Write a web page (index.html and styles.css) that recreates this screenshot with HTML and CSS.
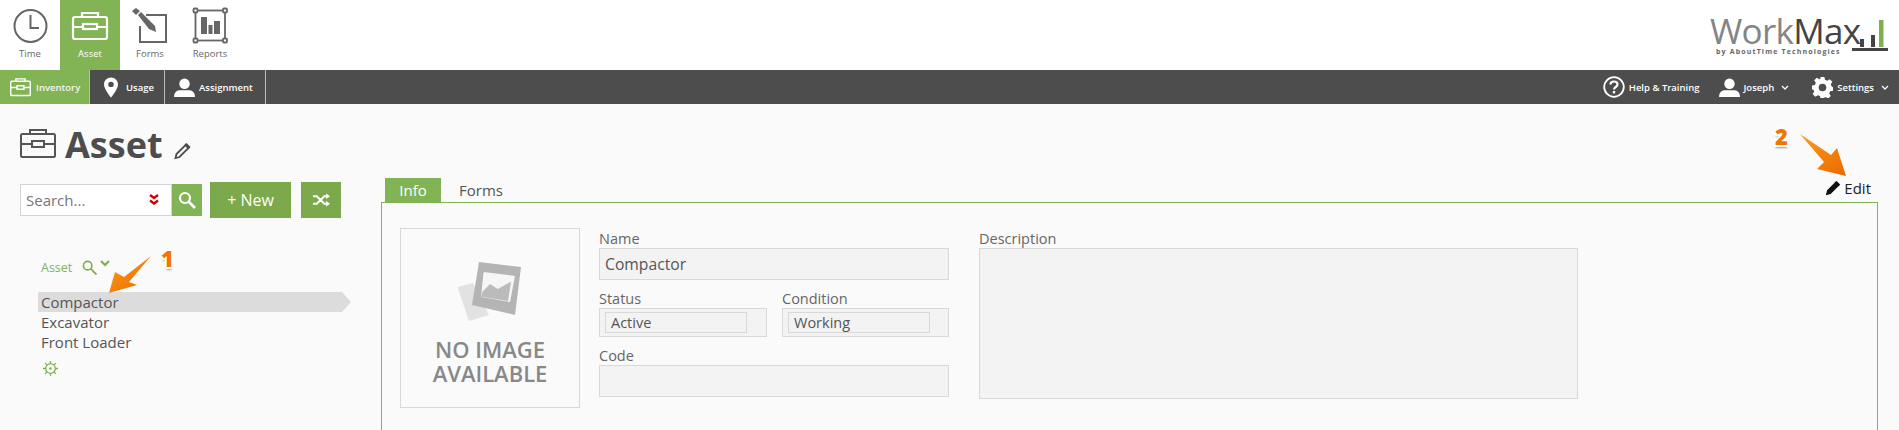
FILE: index.html
```html
<!DOCTYPE html>
<html lang="en">
<head>
  <meta charset="UTF-8" />
  <title>WorkMax Asset</title>
  <link rel="stylesheet" href="styles.css">
</head>
<body>
  <header class="topbar">
    <a class="app-tab">
      <svg class="app-icon" viewBox="0 0 40 40"><circle cx="20.500" cy="20" r="16" fill="none" stroke="#666" stroke-width="2"/><path d="M20.500 9v13h8.500" fill="none" stroke="#666" stroke-width="2"/></svg>
      <span>Time</span>
    </a>
    <a class="app-tab active">
      <svg class="app-icon" viewBox="0 0 40 40"><g fill="none" stroke="#fff" stroke-width="2.200"><rect x="3" y="11" width="34" height="22" rx="2"/><path d="M3 21h10M27 21h10M12 11V7h16v4"/><rect x="13" y="18" width="14" height="5"/></g></svg>
      <span>Asset</span>
    </a>
    <a class="app-tab">
      <svg class="app-icon" viewBox="0 0 40 40"><path d="M16 9h20v27H10V20" fill="none" stroke="#666" stroke-width="2"/><path d="M2 5l4-3 4 3-4 4z" fill="#666"/><path d="M8 9l3-3 14 14 1 6-7-3z" fill="#666"/></svg>
      <span>Forms</span>
    </a>
    <a class="app-tab">
      <svg class="app-icon" viewBox="0 0 40 40"><rect x="5.500" y="4.500" width="29.500" height="30" fill="none" stroke="#666" stroke-width="1.800"/><g fill="#fff" stroke="#666" stroke-width="1.800"><rect x="3.500" y="2.500" width="4" height="4" rx="1"/><rect x="33" y="2.500" width="4" height="4" rx="1"/><rect x="3.500" y="32.500" width="4" height="4" rx="1"/><rect x="33" y="32.500" width="4" height="4" rx="1"/></g><path d="M11 11h6v17h-6zM18.500 19h4v9h-4zM24 15h6v13h-6z" fill="#666"/></svg>
      <span>Reports</span>
    </a>
    <div class="logo">
      <div class="logo-word"><span class="logo-work">Work</span><span class="logo-max">Max</span></div>
      <div class="logo-sub">by AboutTime Technologies</div>
      <svg class="logo-bars" viewBox="0 0 36 32"><path d="M0 30.500h36" stroke="#444" stroke-width="3"/><path d="M8 20h4v8H8zM19 16h4v12h-4z" fill="#444"/><path d="M27 1h4.500v27H27z" fill="#7fb04f"/></svg>
    </div>
  </header>

  <nav class="subnav">
    <a class="sub-item active">
      <svg class="sub-icon" viewBox="0 0 40 40"><g fill="none" stroke="#fff" stroke-width="2.500"><rect x="3" y="9" width="34" height="25" rx="2"/><path d="M3 20h11M26 20h11M12 9V5h16v4"/><rect x="14" y="17" width="12" height="6"/></g></svg>
      Inventory
    </a>
    <a class="sub-item usage">
      <svg class="pin" viewBox="0 0 18 26"><path fill-rule="evenodd" d="M9 0C4 0 0 4 0 9c0 6 9 17 9 17s9-11 9-17c0-5-4-9-9-9zm0 5.500a3.500 3.500 0 1 1 0 7 3.500 3.500 0 0 1 0-7z" fill="#fff"/></svg>
      Usage
    </a>
    <a class="sub-item assign">
      <svg class="person" viewBox="0 0 22 20"><circle cx="11" cy="6" r="5.500" fill="#fff"/><path d="M0 20c0-5 3-7 7-7h8c4 0 7 2 7 7z" fill="#fff"/></svg>
      Assignment
    </a>
    <div class="sub-right">
      <a class="right-item">
        <svg class="help" viewBox="0 0 22 22"><circle cx="11" cy="11" r="9.800" fill="none" stroke="#fff" stroke-width="1.800"/><path d="M7.500 8.500c0-2 1.500-3 3.500-3s3.500 1.200 3.500 3c0 2.500-3.500 2.500-3.500 5" fill="none" stroke="#fff" stroke-width="2.200"/><rect x="9.800" y="15" width="2.400" height="2.400" fill="#fff"/></svg>
        Help &amp; Training
      </a>
      <a class="right-item">
        <svg class="person" viewBox="0 0 22 20"><circle cx="11" cy="6" r="5.500" fill="#fff"/><path d="M0 20c0-5 3-7 7-7h8c4 0 7 2 7 7z" fill="#fff"/></svg>
        Joseph
        <svg class="caret" viewBox="0 0 8 5"><path d="M1 1l3 3 3-3" fill="none" stroke="#fff" stroke-width="1.300"/></svg>
      </a>
      <a class="right-item settings">
        <svg class="cog" viewBox="0 0 22 22"><path fill-rule="evenodd" fill="#fff" d="M9 0h4l.6 3 2.300 1 2.600-1.700 2.800 2.800L19.600 7.700l1 2.300 1.400.7v3.600l-3 .6-1 2.300 1.700 2.600-2.800 2.800-2.600-1.700-1.300.6-.6 1.500H9l-.6-3-2.300-1-2.600 1.700-2.800-2.800 1.700-2.600-1-2.300L0 13V9l3-.6 1-2.300L2.300 3.500 5.100.7l2.600 1.700 1-.4zM11 7a4 4 0 1 0 0 8 4 4 0 0 0 0-8z"/></svg>
        Settings
        <svg class="caret" viewBox="0 0 8 5"><path d="M1 1l3 3 3-3" fill="none" stroke="#fff" stroke-width="1.300"/></svg>
      </a>
    </div>
  </nav>

  <main class="page">
    <h1 class="page-title">
      <svg class="title-icon" viewBox="0 0 36 30"><g fill="none" stroke="#555" stroke-width="2"><rect x="1" y="6" width="34" height="23" rx="1.500"/><path d="M1 16h11M24 16h11M10 6V2h16v4"/><rect x="12" y="13" width="12" height="6"/></g></svg>
      Asset
      <svg class="title-pen" viewBox="0 0 18 18"><path d="M12.500 2.500l3 3L6 15l-4 1 1-4z" fill="none" stroke="#4d4d4d" stroke-width="1.800"/><path d="M13 1l4 4-2.200 2.200-4-4z" fill="#4d4d4d"/></svg>
    </h1>

    <div class="columns">
      <aside class="sidebar">
        <div class="toolbar">
          <div class="search">
            <span class="search-text">Search...</span>
            <svg class="chevrons" viewBox="0 0 10 12"><path d="M1 1l4 3 4-3M1 6.500l4 3 4-3" fill="none" stroke="#c00" stroke-width="2.200"/></svg>
          </div>
          <button class="search-btn"><svg viewBox="0 0 18 18"><circle cx="7" cy="7" r="5" fill="none" stroke="#fff" stroke-width="2.200"/><path d="M11 11l6 6" stroke="#fff" stroke-width="2.600"/></svg></button>
          <button class="btn-new">+ New</button>
          <button class="btn-shuffle"><svg viewBox="0 0 18 14"><path d="M0 3h4l8 8h3M0 11h4l8-8h3" fill="none" stroke="#fff" stroke-width="2"/><path d="M14 0l4 3-4 3zM14 8l4 3-4 3z" fill="#fff"/></svg></button>
        </div>

        <div class="tree-head">
          <span>Asset</span>
          <svg class="tree-search" viewBox="0 0 16 16"><circle cx="6" cy="6" r="4.500" fill="none" stroke="#7fb04f" stroke-width="1.800"/><path d="M9.500 9.500l6 6" stroke="#7fb04f" stroke-width="2"/></svg>
          <svg class="tree-caret" viewBox="0 0 10 7"><path d="M1 1l4 4 4-4" fill="none" stroke="#7fb04f" stroke-width="2.200"/></svg>
        </div>
        <ul class="tree">
          <li class="selected">Compactor</li>
          <li>Excavator</li>
          <li>Front Loader</li>
        </ul>
        <svg class="tree-gear" viewBox="0 0 14 14"><circle cx="7" cy="7" r="4.500" fill="none" stroke="#7fb04f" stroke-width="1.200"/><circle cx="7" cy="7" r="1.200" fill="#7fb04f"/><path d="M7 0v2M7 12v2M0 7h2M12 7h2M2 2l1.500 1.500M10.500 10.500L12 12M12 2l-1.500 1.500M3.500 10.500L2 12" stroke="#7fb04f" stroke-width="1.200"/></svg>
      </aside>

      <section class="content">
        <div class="tab-row">
          <a class="tab active">Info</a>
          <a class="tab">Forms</a>
          <a class="edit">
            <svg viewBox="0 0 18 18"><path d="M12.500 2.500l3 3L6 15l-4 1 1-4z" fill="#111" stroke="#111" stroke-width="1.500"/><path d="M13 1l4 4-2.200 2.200-4-4z" fill="#111"/></svg>
            Edit
          </a>
        </div>
        <div class="panel">
          <div class="no-image">
            <svg class="photo" viewBox="0 0 64 60"><polygon points="0.500,25 16,21 32,53 12,59" fill="#e2e2e2"/><polygon points="15,43 22,0 64,5 58,53" fill="#b4b4b4"/><polygon points="26.600,10 58,14 53,40 24,35" fill="#f6f6f6"/><polygon points="25.400,29.700 33,22 40.700,27 54,19.700 51,39 24,34.700" fill="#bbb"/></svg>
            <div class="no-image-text">NO IMAGE<br>AVAILABLE</div>
          </div>

          <div class="fields">
            <label>Name</label>
            <div class="field">Compactor</div>
            <div class="field-pair">
              <div>
                <label>Status</label>
                <div class="select-box"><div class="select-inner">Active</div></div>
              </div>
              <div>
                <label>Condition</label>
                <div class="select-box"><div class="select-inner">Working</div></div>
              </div>
            </div>
            <label>Code</label>
            <div class="field"></div>
          </div>

          <div class="description">
            <label>Description</label>
            <div class="desc-box"></div>
          </div>
        </div>
      </section>
    </div>
  </main>

  <!-- callouts drawn over the screenshot -->
  <svg class="callouts" viewBox="0 0 1899 430">
    <defs>
      <linearGradient id="arrowFill" x1="0" y1="0" x2="1" y2="1">
        <stop offset="0" stop-color="#ff9a1a"/>
        <stop offset="1" stop-color="#e86a00"/>
      </linearGradient>
    </defs>
    <polygon points="109,293 115,272 124,277 151,256 129,282 137,285" fill="url(#arrowFill)"/>
    <polygon points="1846,176 1837,148 1831,155 1800,134 1824,162 1817,169" fill="url(#arrowFill)"/>
  </svg>
  <span class="callout-num num-one">1</span>
  <span class="callout-num num-two">2</span>
</body>
</html>
```

FILE: styles.css
```css
html, body {
  margin: 0;
  height: 430px;
  overflow: hidden;
}
body {
  font-family: "Open Sans", sans-serif;
  background: #fafafa;
  color: #555;
  position: relative;
}
a { display: flex; }

.topbar {
  height: 70px;
  background: #fff;
  display: flex;
}
.app-tab {
  width: 60px;
  flex-direction: column;
  align-items: center;
  font-size: 9.500px;
  color: #666;
  padding-top: 6px;
  box-sizing: border-box;
}
.app-tab.active {
  background: #82b354;
  color: #fff;
}
.app-icon {
  width: 40px;
  height: 40px;
  margin-bottom: 1px;
}
.logo {
  margin-left: auto;
  margin-right: 11px;
  margin-top: 15px;
  width: 178px;
  height: 42px;
  position: relative;
}
.logo-word {
  font-size: 35px;
  font-weight: 400;
  line-height: 32px;
  letter-spacing: -0.700px;
  white-space: nowrap;
}
.logo-work { color: #858585; }
.logo-max { color: #444; }
.logo-sub {
  position: absolute;
  left: 6px;
  top: 32px;
  font-size: 7px;
  font-weight: 700;
  letter-spacing: 1.150px;
  color: #666;
  white-space: nowrap;
  line-height: 9px;
}
.logo-bars {
  position: absolute;
  right: 0;
  top: 4px;
  width: 36px;
  height: 32px;
}

.subnav {
  height: 34px;
  background: #4d4d4d;
  display: flex;
  align-items: stretch;
  color: #fff;
  font-size: 9.500px;
  font-weight: 600;
}
.sub-item {
  align-items: center;
  border-right: 1px solid #bbb;
  box-sizing: border-box;
  white-space: nowrap;
}
.sub-item.active {
  width: 90px;
  background: #82b354;
  padding-left: 9px;
  gap: 4px;
  color: #f4f4f4;
}
.sub-item.usage {
  width: 75px;
  padding-left: 14px;
  gap: 8px;
}
.sub-item.assign {
  width: 101px;
  padding-left: 9px;
  gap: 4px;
}
.sub-icon { width: 23px; height: 23px; }
.pin { width: 14px; height: 21px; }
.person { width: 21px; height: 19px; }
.sub-right {
  margin-left: auto;
  display: flex;
  padding-right: 10px;
}
.right-item {
  align-items: center;
  gap: 4px;
  margin-left: 19px;
}
.right-item.settings { margin-left: 23px; }
.help { width: 22px; height: 22px; }
.cog { width: 21px; height: 21px; }
.caret { width: 8px; height: 5px; margin-left: 3px; }

.page-title {
  margin: 0;
  padding: 19px 0 0 20px;
  display: flex;
  align-items: center;
  font-size: 36px;
  line-height: 44px;
  font-weight: 700;
  color: #4d4d4d;
  height: 44px;
  gap: 9px;
}
.title-icon { width: 36px; height: 30px; margin-top: -4px; }
.title-pen { width: 19px; height: 18px; margin-top: 12px; margin-left: 1px; }

.columns {
  display: flex;
  padding-top: 11px;
}
.sidebar {
  width: 381px;
  flex: none;
  box-sizing: border-box;
  padding-left: 20px;
}
.toolbar {
  display: flex;
  align-items: center;
  height: 36px;
  margin-top: 4px;
}
.search {
  width: 152px;
  height: 32px;
  box-sizing: border-box;
  border: 1px solid #d4d4d4;
  background: #fff;
  display: flex;
  align-items: center;
  justify-content: space-between;
  padding: 0 12px 0 5px;
  font-size: 15px;
  color: #777;
}
.chevrons { width: 10px; height: 12px; }
button {
  border: 0;
  padding: 0;
  font-family: inherit;
  display: flex;
  align-items: center;
  justify-content: center;
}
.search-btn {
  width: 30px;
  height: 32px;
  background: #82b354;
}
.search-btn svg { width: 18px; height: 18px; }
.btn-new {
  width: 81px;
  height: 36px;
  margin-left: 8px;
  background: #7ba94b;
  color: #fff;
  font-size: 16px;
}
.btn-shuffle {
  width: 40px;
  height: 36px;
  margin-left: 10px;
  background: #7ba94b;
}
.btn-shuffle svg { width: 17px; height: 14px; }

.tree-head {
  display: flex;
  align-items: center;
  margin-top: 39px;
  padding-left: 21px;
  height: 20px;
  font-size: 12.500px;
  color: #82b354;
}
.tree-search { width: 15px; height: 15px; margin-left: 10px; }
.tree-caret { width: 10px; height: 7px; margin: -8px 0 0 3px; }
.tree {
  list-style: none;
  margin: 15px 0 0;
  padding: 0 0 0 18px;
  font-size: 15px;
  line-height: 20px;
  color: #555;
}
.tree li { padding-left: 3px; height: 20px; }
.tree .selected {
  background: #dcdcdc;
  width: 304px;
  box-sizing: border-box;
  position: relative;
}
.tree .selected::after {
  content: "";
  position: absolute;
  left: 100%;
  top: 0;
  border-left: 9px solid #dcdcdc;
  border-top: 10px solid transparent;
  border-bottom: 10px solid transparent;
}
.tree-gear {
  display: block;
  width: 15px;
  height: 15px;
  margin: 9px 0 0 23px;
}

.content {
  flex: none;
  width: 1497px;
}
.tab-row {
  display: flex;
  align-items: flex-end;
  height: 24px;
  padding-left: 4px;
  font-size: 15px;
}
.tab {
  height: 24px;
  align-items: center;
  padding: 0 12px;
}
.tab.active {
  width: 56px;
  box-sizing: border-box;
  background: #82b354;
  color: #fff;
  justify-content: center;
  margin-right: 6px;
}
.edit {
  margin-left: auto;
  margin-right: 7px;
  align-items: center;
  gap: 3px;
  color: #222;
  height: 24px;
  position: relative;
  top: -2px;
}
.edit svg { width: 16px; height: 16px; }
.panel {
  border: 1px solid #82b354;
  border-bottom: 0;
  height: 228px;
  box-sizing: border-box;
  display: flex;
  align-items: flex-start;
  padding: 25px 0 0 18px;
  font-size: 14px;
}
.no-image {
  width: 180px;
  height: 180px;
  box-sizing: border-box;
  border: 1px solid #d9d9d9;
  display: flex;
  flex-direction: column;
  align-items: center;
  padding-top: 33px;
}
.photo { width: 64px; height: 60px; margin-left: -3px; }
.no-image-text {
  margin-top: 15px;
  font-size: 22px;
  line-height: 24px;
  font-weight: 600;
  color: #888;
  text-align: center;
}
.fields {
  width: 350px;
  margin-left: 19px;
}
label {
  display: block;
  height: 20px;
  line-height: 22px;
  font-size: 14.500px;
  color: #666;
}
.field {
  height: 32px;
  box-sizing: border-box;
  border: 1px solid #d9d9d9;
  background: #f3f3f3;
  padding-left: 5px;
  line-height: 30px;
  font-size: 15.700px;
  margin-bottom: 8px;
}
.field-pair {
  display: grid;
  grid-template-columns: 168px 167px;
  gap: 15px;
  margin-bottom: 8px;
}
.select-box {
  height: 29px;
  box-sizing: border-box;
  border: 1px solid #d9d9d9;
  background: #f3f3f3;
  padding: 3px 0 0 5px;
}
.select-inner {
  width: 142px;
  height: 21px;
  box-sizing: border-box;
  border: 1px solid #d9d9d9;
  padding-left: 5px;
  line-height: 19px;
  font-size: 14.500px;
  color: #555;
}
.description {
  width: 599px;
  margin-left: 30px;
}
.desc-box {
  height: 151px;
  box-sizing: border-box;
  border: 1px solid #d9d9d9;
  background: #f3f3f3;
}

.callouts {
  position: absolute;
  left: 0;
  top: 0;
  width: 1899px;
  height: 430px;
  pointer-events: none;
}
.callout-num {
  position: absolute;
  font-size: 22px;
  font-weight: 800;
  line-height: 24px;
  color: #f57300;
  text-shadow: 2px 0 #fff, -2px 0 #fff, 0 2px #fff, 0 -2px #fff, 1.500px 1.500px #fff, -1.500px -1.500px #fff, 1.500px -1.500px #fff, -1.500px 1.500px #fff, 0 3px 2px #999;
}
.num-one { left: 161px; top: 246px; }
.num-two { left: 1775px; top: 124px; }
```
